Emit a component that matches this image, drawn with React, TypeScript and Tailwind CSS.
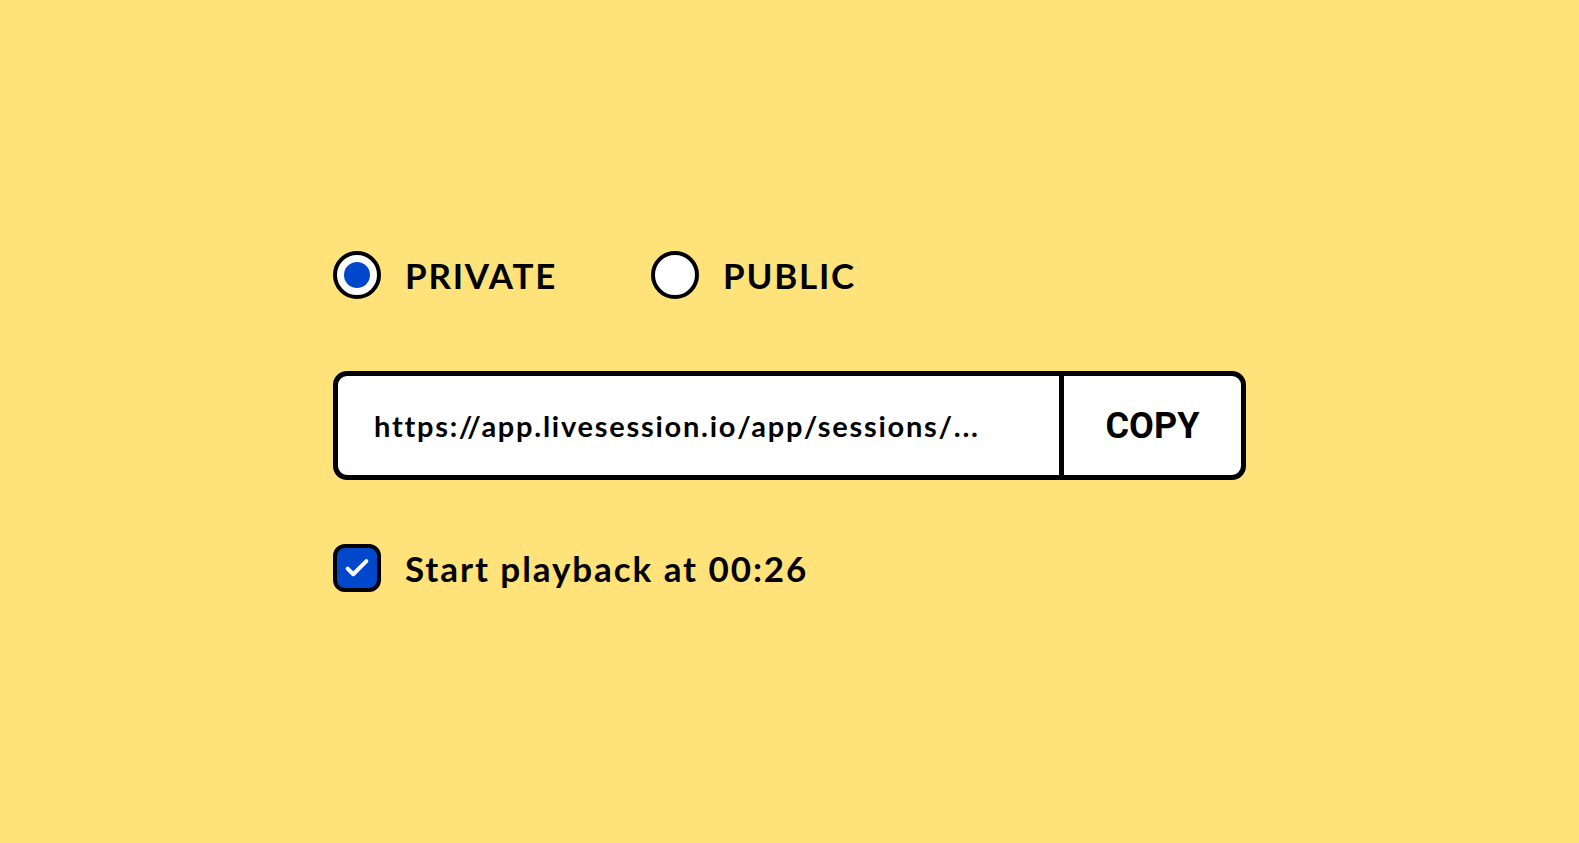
import { useState } from "react";

type Visibilidad = "private" | "public";

function Radio({ activo, etiqueta, onClick }: { activo: boolean; etiqueta: string; onClick: () => void }) {
  return (
    <button type="button" onClick={onClick} className="flex items-center gap-[24px]">
      <span className="flex h-[48px] w-[48px] items-center justify-center rounded-full border-[4px] border-black bg-white">
        {activo && <span className="h-[26px] w-[26px] rounded-full bg-[#0047cc]" />}
      </span>
      <span className="text-[35px] font-bold leading-none tracking-[0.05em] text-black">{etiqueta}</span>
    </button>
  );
}

export default function App() {
  const [visibilidad, setVisibilidad] = useState<Visibilidad>("private");
  const [desdeTiempo, setDesdeTiempo] = useState(true);

  return (
    <div
      className="flex h-screen w-full items-center justify-center bg-[#ffe37a]"
      style={{ fontFamily: "Lato, 'Noto Sans', sans-serif" }}
    >
      <div className="flex w-[913px] flex-col">
        <div className="flex items-center gap-[94px]">
          <Radio activo={visibilidad === "private"} etiqueta="PRIVATE" onClick={() => setVisibilidad("private")} />
          <Radio activo={visibilidad === "public"} etiqueta="PUBLIC" onClick={() => setVisibilidad("public")} />
        </div>

        <div className="mt-[72px] flex h-[109px] overflow-hidden rounded-[14px] border-[5px] border-black bg-white">
          <div className="flex flex-1 items-center pl-[36px] text-[29px] font-bold tracking-[0.06em] text-black">
            https://app.livesession.io/app/sessions/...
          </div>
          <button
            type="button"
            className="flex w-[182px] items-center justify-center border-l-[5px] border-black text-[36px] font-bold text-black"
            style={{ fontFamily: "Roboto, sans-serif" }}
          >
            COPY
          </button>
        </div>

        <button type="button" onClick={() => setDesdeTiempo(!desdeTiempo)} className="mt-[64px] flex items-center gap-[24px]">
          <span className="flex h-[48px] w-[48px] items-center justify-center rounded-[12px] border-[4px] border-black bg-[#0047cc]">
            {desdeTiempo && (
              <svg width="30" height="30" viewBox="0 0 24 24" fill="none">
                <path d="M4.5 12.5l4.5 4.5L19.5 6.5" stroke="white" strokeWidth="3.2" strokeLinecap="round" strokeLinejoin="round" />
              </svg>
            )}
          </span>
          <span className="text-[35px] font-bold leading-none tracking-[0.055em] text-black">Start playback at 00:26</span>
        </button>
      </div>
    </div>
  );
}
